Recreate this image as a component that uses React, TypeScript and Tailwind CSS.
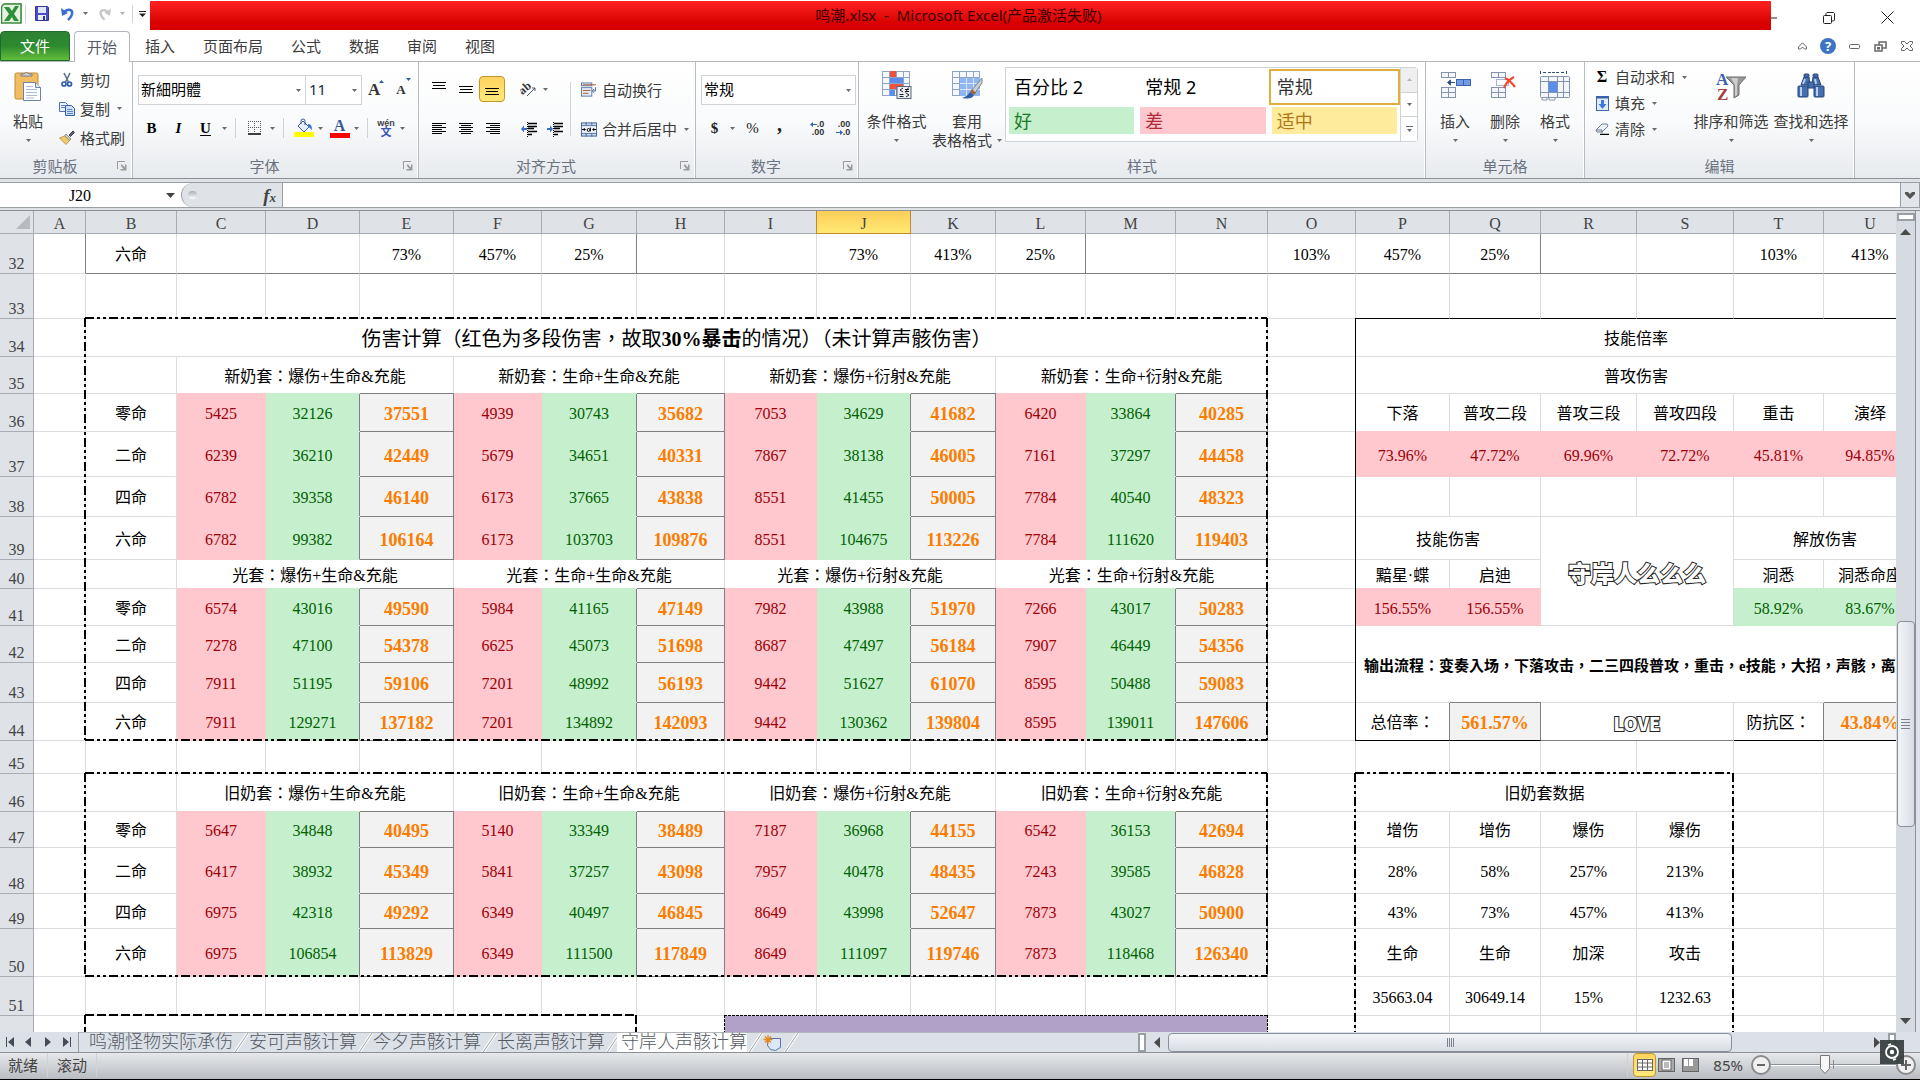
import React from "react";

/* ---------- small shared pieces ---------- */

const Caret = ({ className = "" }: { className?: string }) => (
  <svg width="5" height="3" viewBox="0 0 5 3" className={`shrink-0 ${className}`} aria-hidden="true">
    <path d="M0 0h5L2.500 3z" fill="#6b6b6b" />
  </svg>
);

const Divider = ({ className = "h-5" }: { className?: string }) => (
  <span className={`w-px shrink-0 bg-[#cfd2d6] ${className}`} />
);

const IconButton = ({
  label,
  className = "w-[27px]",
  children,
}: {
  label: string;
  className?: string;
  children: React.ReactNode;
}) => (
  <button type="button" aria-label={label} className={`flex h-[26px] shrink-0 items-center justify-center ${className}`}>
    {children}
  </button>
);

const Group = ({
  title,
  className,
  launcher = true,
  children,
}: {
  title: string;
  className: string;
  launcher?: boolean;
  children: React.ReactNode;
}) => (
  <section
    aria-label={title}
    className={`relative flex shrink-0 flex-col border-r border-[#b9bdc3] shadow-[inset_-1px_0_0_#ffffff] ${className}`}
  >
    <div className="h-[92px]">{children}</div>
    <div className={`flex h-[24px] items-center justify-center text-[#6b7280] ${launcher ? "pr-[22px]" : ""}`}>{title}</div>
    {launcher && (
      <button type="button" aria-label={`${title}设置`} className="absolute right-[5px] bottom-[7px]">
        <svg width="10" height="10" viewBox="0 0 10 10">
          <path d="M.5 8V.5H8" fill="none" stroke="#9a9a9a" />
          <path d="M4 3.5h1L8 6.500V3.500h1.500V9.500H3.500V8H6.500L4 5z" fill="#9a9a9a" />
        </svg>
      </button>
    )}
  </section>
);

const Lines = ({ widths, align, top = 0 }: { widths: number[]; align: "l" | "c" | "r"; top?: number }) => (
  <svg width="14" height="14" viewBox="0 0 14 14" aria-hidden="true">
    {widths.map((w, i) => (
      <rect
        key={i}
        x={align === "l" ? 0 : align === "c" ? (14 - w) / 2 : 14 - w}
        y={top + i * (widths.length > 3 ? 2 : 3)}
        width={w}
        height="1"
        fill="#000"
      />
    ))}
  </svg>
);

const BigButton = ({
  lines,
  className,
  icon,
}: {
  lines: string[];
  className: string;
  icon: React.ReactNode;
}) => (
  <button type="button" className={`flex h-[84px] shrink-0 flex-col items-center pt-[3px] ${className}`}>
    <span className="flex h-[34px] items-center justify-center">{icon}</span>
    <span className="mt-[8px] leading-[20px] whitespace-nowrap">{lines[0]}</span>
    <span className="flex h-[18px] items-center gap-[5px] whitespace-nowrap">
      {lines[1]}
      <Caret />
    </span>
  </button>
);

const SmallButton = ({
  label,
  icon,
  caret = false,
  className = "h-[29px]",
}: {
  label: string;
  icon: React.ReactNode;
  caret?: boolean;
  className?: string;
}) => (
  <button type="button" className={`flex items-center whitespace-nowrap ${className}`}>
    <span className="mr-[5px] flex w-4 justify-center">{icon}</span>
    {label}
    {caret && <Caret className="ml-[7px]" />}
  </button>
);

/* ---------- ribbon drawings ---------- */

const GridIcon = ({ children }: { children?: React.ReactNode }) => (
  <svg width="32" height="32" viewBox="0 0 32 32" aria-hidden="true">
    <rect x="1.500" y="1.500" width="27" height="24" fill="#f4f7fc" stroke="#8fa3c4" />
    <path d="M8.500 1v25M15.500 1v25M22.500 1v25M1 7.500h28M1 13.500h28M1 19.500h28" stroke="#8fa3c4" />
    {children}
  </svg>
);

const PasteIcon = () => (
  <svg width="28" height="32" viewBox="0 0 28 32" aria-hidden="true">
    <rect x="1" y="3" width="23" height="26" rx="1.500" fill="#f0bd62" stroke="#c48b35" />
    <path d="M7 6V4h3a3 3 0 0 1 5 0h3v2z" fill="#d5d8dc" stroke="#777c84" />
    <path d="M9.500 12.500h12l5 5v13h-17z" fill="#fff" stroke="#6c83a9" />
    <path d="M21.500 12.500v5h5" fill="#dbe5f3" stroke="#6c83a9" />
    <path d="M12 16.500h7M12 19.500h11M12 22.500h11M12 25.500h11M12 28h8" stroke="#a9bbd6" />
  </svg>
);

const ScissorsIcon = () => (
  <svg width="12" height="16" viewBox="0 0 12 16" aria-hidden="true">
    <path d="M3 1l4.500 9M9 1L4.500 10" stroke="#5e6f89" strokeWidth="1.600" fill="none" />
    <circle cx="3" cy="12" r="2" fill="none" stroke="#2f5ea8" strokeWidth="1.700" />
    <circle cx="8.500" cy="12" r="2" fill="none" stroke="#2f5ea8" strokeWidth="1.700" />
  </svg>
);

const CopyIcon = () => (
  <svg width="16" height="14" viewBox="0 0 16 14" aria-hidden="true">
    <path d="M.5.5h6l2 2v7h-8z" fill="#e9f0fb" stroke="#4d74b3" />
    <path d="M6.500 3.500h6l3 3v7h-9z" fill="#cfdff6" stroke="#2f5ea8" />
    <path d="M2 3.500h4M2 5.500h4M8 7.500h5M8 9.500h6M8 11.500h6" stroke="#5b84c4" />
  </svg>
);

const BrushIcon = () => (
  <svg width="16" height="15" viewBox="0 0 16 15" aria-hidden="true">
    <path d="M10 5l4-4 1.500 1.500-4 4z" fill="#59606e" stroke="#3d3d66" />
    <path d="M7 4l5 5-2 1.500L5.500 6z" fill="#c6cbd3" stroke="#6d7480" strokeWidth=".7" />
    <path d="M5.500 6l5 4.500L7 14.500 0.500 8z" fill="#edcb6e" stroke="#a97f27" strokeWidth=".7" />
  </svg>
);

const FillIcon = () => (
  <svg width="20" height="20" viewBox="0 0 20 20" aria-hidden="true">
    <path d="M4 8l5-5 6 6-5 5z" fill="#e6edf8" stroke="#3c5f9a" />
    <path d="M7 6V3a2 2 0 0 1 4 0v4" fill="none" stroke="#3c5f9a" />
    <path d="M14 6c3 0 4 2 4 6-2-1-2-3-4-3z" fill="#3f74c8" />
    <rect x="0" y="14" width="20" height="5" fill="#ffff00" />
  </svg>
);

const FontColorIcon = () => (
  <span className="flex flex-col items-center font-['Liberation_Serif',serif] text-base leading-[14px] font-bold text-[#3a5a94]">
    A<span className="h-[5px] w-5 bg-[#ff0000]" />
  </span>
);

const IndentIcon = ({ inwards }: { inwards: boolean }) => (
  <svg width="16" height="15" viewBox="0 0 16 15" aria-hidden="true">
    <path d="M7 1.500h9M7 4.500h9M7 6.500h6M7 9.500h9M7 12.500h4" stroke="#000" strokeWidth="1.500" />
    <path d="M6.500 0v15" stroke="#000" strokeDasharray="1 1" />
    {inwards ? <path d="M0 6h3V3.500L6 7 3 10.500V8H0z" fill="#3a6fc9" /> : <path d="M6 6H3V3.500L0 7l3 3.500V8h3z" fill="#3a6fc9" />}
  </svg>
);

const WrapIcon = () => (
  <svg width="17" height="16" viewBox="0 0 17 16" aria-hidden="true">
    <rect x=".5" y=".5" width="11" height="3" fill="#e5edf8" stroke="#5b78a8" />
    <rect x=".5" y="5.500" width="11" height="9" fill="#e5edf8" stroke="#5b78a8" />
    <path d="M2 2.500h14M2 8.500h8M2 11.500h6" stroke="#a5561f" />
    <path d="M15.500 5v4h-3M14 7l-2 2 2 2" fill="none" stroke="#3c5f9a" />
  </svg>
);

const MergeIcon = () => (
  <svg width="17" height="15" viewBox="0 0 17 15" aria-hidden="true">
    <rect x=".5" y=".5" width="16" height="14" fill="#c7d8f0" stroke="#42618f" />
    <path d="M0 3.500h17M0 11.500h17M5.500 0v3M11.500 0v3M5.500 12v3M11.500 12v3" stroke="#42618f" />
    <rect x="1" y="4" width="15" height="7" fill="#eef3fa" />
    <path d="M1 7.500h4M16 7.500h-4M3.500 6v3M13.500 6v3" stroke="#000" />
    <circle cx="8" cy="8" r="1.500" fill="none" stroke="#000" />
    <path d="M10 5.500v4" stroke="#000" />
  </svg>
);

const DecimalIcon = ({ more }: { more: boolean }) => (
  <span className="flex flex-col font-['Liberation_Sans',sans-serif] text-[9px] leading-[8px] font-bold text-[#333]">
    <span className="flex items-center justify-end">
      {more && (
        <svg width="7" height="5" viewBox="0 0 7 5" aria-hidden="true">
          <path d="M0 2.500L3 0v2h4v1H3v2z" fill="#2f62c0" />
        </svg>
      )}
      {more ? ".0" : ".00"}
    </span>
    <span className="flex items-center justify-end">
      {!more && (
        <svg width="7" height="5" viewBox="0 0 7 5" aria-hidden="true">
          <path d="M7 2.500L4 0v2H0v1h4v2z" fill="#2f62c0" />
        </svg>
      )}
      {more ? ".00" : ".0"}
    </span>
  </span>
);

const ConditionalIcon = () => (
  <GridIcon>
    <rect x="9" y="1" width="6" height="6" fill="#ee5340" />
    <rect x="9" y="8" width="13" height="5" fill="#5b8dee" />
    <rect x="9" y="14" width="13" height="5" fill="#ee5340" />
    <rect x="9" y="20" width="5" height="6" fill="#5b8dee" />
    <rect x="16" y="16.500" width="14" height="12" fill="#e9edf3" stroke="#5a6577" />
    <path d="M22 18l-3 2 3 2M18.500 24.500h4M18.500 26.500h4M24 19.500h4M24 21.500h4M27.500 17.500l-3 5M25 23l3 2-3 2" fill="none" stroke="#222" />
  </GridIcon>
);

const TableFormatIcon = () => (
  <GridIcon>
    <rect x="9" y="8" width="20" height="18" fill="#8fb6f2" />
    <path d="M15.500 8v18M22.500 8v18M9 13.500h20M9 19.500h20" stroke="#d9e6fb" />
    <path d="M31 8L21 20l3 3 7-10z" fill="#c9ced6" stroke="#6a6f78" strokeWidth=".8" />
    <path d="M21 19l4 4-2 2-4-3z" fill="#a8672b" />
    <path d="M19 22l4 3c-2 4-6 4-12 3 4-1 6-3 8-6z" fill="#2f5fa8" />
  </GridIcon>
);

const CellsIcon = ({ kind }: { kind: "insert" | "delete" }) => (
  <svg width="34" height="32" viewBox="0 0 34 32" aria-hidden="true">
    <g fill="#f3f6fb" stroke="#8494ad">
      <rect x="3.500" y="2.500" width="7" height="5" />
      <rect x="10.500" y="2.500" width="7" height="5" />
      <rect x="3.500" y="17.500" width="7" height="5" />
      <rect x="10.500" y="17.500" width="7" height="5" />
      <rect x="3.500" y="22.500" width="7" height="5" />
      <rect x="10.500" y="22.500" width="7" height="5" />
    </g>
    {kind === "insert" ? (
      <>
        <rect x="18.500" y="9.500" width="14" height="6" fill="#6f9be8" stroke="#3b63a8" />
        <path d="M25.500 9.500v6" stroke="#3b63a8" />
        <path d="M17 12.500h-6M12.500 10l-3 2.500 3 2.500z" fill="#34507f" stroke="#34507f" />
      </>
    ) : (
      <>
        <rect x="8.500" y="9.500" width="12" height="6" fill="none" stroke="#4a6ea8" strokeDasharray="1 1" />
        <path d="M17 8c4 2 7 5 10 9M26 7c-4 2-8 6-10 11" fill="none" stroke="#f04a30" strokeWidth="2.200" />
      </>
    )}
  </svg>
);

const FormatIcon = () => (
  <svg width="32" height="32" viewBox="0 0 32 32" aria-hidden="true">
    <path d="M1.500 1v4M27.500 1v4M4 2.500h3M22 2.500h3M9 2.500h12" stroke="#34507f" strokeDasharray="3 1" />
    <rect x="1.500" y="6.500" width="29" height="21" rx="1" fill="#f3f6fb" stroke="#8494ad" />
    <path d="M9.500 6v22M18.500 6v22M24.500 6v22M1 11.500h30M1 22.500h30" stroke="#8494ad" />
    <rect x="10" y="12" width="8" height="10" fill="#5b8dee" />
    <path d="M3 28v2h5v-2M10 28v2h6v-2" fill="#fff" stroke="#8494ad" />
  </svg>
);

const SortIcon = () => (
  <svg width="32" height="32" viewBox="0 0 32 32" aria-hidden="true">
    <path d="M11 7h20l-7 8v10l-5 3V15z" fill="#9a9a9a" stroke="#6f6f6f" />
    <path d="M16 8h7l-1 8v9l-2 1V15z" fill="#cfcfcf" />
    <text x="1" y="15" fontFamily="Liberation Serif, serif" fontWeight="bold" fontSize="17" fill="#3b62ad">A</text>
    <text x="2" y="30" fontFamily="Liberation Serif, serif" fontWeight="bold" fontSize="17" fill="#a63c3c">Z</text>
  </svg>
);

const BinocularsIcon = () => (
  <svg width="28" height="26" viewBox="0 0 28 26" aria-hidden="true">
    <g fill="#466fae" stroke="#26437a">
      <path d="M4 12l3-8h5l1 8zM24 12l-3-8h-5l-1 8z" />
      <rect x="7" y="1" width="5" height="3" rx="1" />
      <rect x="16" y="1" width="5" height="3" rx="1" />
      <rect x="1" y="13" width="10" height="11" rx="1" />
      <rect x="17" y="13" width="10" height="11" rx="1" />
      <path d="M11 9h6v6h-6z" />
    </g>
    <path d="M4 14v9M20 14v9M8 6l-2 5M18 6l1 5" stroke="#b9cdf0" strokeWidth="2" />
  </svg>
);

/* ---------- title bar & tabs ---------- */

const TitleBar = () => (
  <header className="flex h-[31px] shrink-0 items-start bg-white">
    <div className="flex h-[27px] w-[150px] shrink-0 items-center">
      <svg width="22" height="22" viewBox="0 0 22 22" className="ml-px shrink-0" aria-label="Excel">
        <rect x="4" y="1" width="16" height="18" fill="#fff" stroke="#5a9a56" />
        <path d="M0.500 3.500L3 1h17v19H.5z" fill="#e4f2e2" stroke="#3c8a3c" strokeWidth="1.500" />
        <path d="M3 4h5l3 4 3-5h4l-5 8 5 7h-5l-2-4-3 4H3l5-7z" fill="#2f8f3a" />
      </svg>
      <Divider className="ml-[2px] h-[18px] bg-[#8a8a8a]" />
      <button type="button" aria-label="保存" className="ml-[9px] shrink-0">
        <svg width="14" height="15" viewBox="0 0 14 15">
          <path d="M.5 .5h12l1 1v13H.5z" fill="#4a4fc4" stroke="#32369a" />
          <rect x="3" y="1" width="8" height="6" fill="#dfe8fa" />
          <rect x="3" y="9" width="8" height="5" fill="#eceef5" />
          <rect x="8" y="10" width="2" height="4" fill="#32369a" />
        </svg>
      </button>
      <button type="button" aria-label="撤销" className="ml-3 flex shrink-0 items-center">
        <svg width="14" height="14" viewBox="0 0 14 14">
          <path d="M3 5c5-4 9-2 8 2-.5 3-2 4-4 6" fill="none" stroke="#3a6fd0" strokeWidth="2.500" />
          <path d="M0 1l1 8 6-3z" fill="#3a6fd0" />
        </svg>
        <Caret className="ml-[8px]" />
      </button>
      <button type="button" aria-label="恢复" className="ml-[10px] flex shrink-0 items-center opacity-50">
        <svg width="13" height="14" viewBox="0 0 14 14">
          <path d="M11 5C6 1 2 3 3 7c.5 3 2 4 4 6" fill="none" stroke="#909090" strokeWidth="2.500" />
          <path d="M14 1l-1 8-6-3z" fill="#909090" />
        </svg>
        <Caret className="ml-[9px]" />
      </button>
      <Divider className="ml-[7px] h-[18px] bg-[#8a8a8a]" />
      <button type="button" aria-label="自定义快速访问工具栏" className="ml-[6px] shrink-0">
        <svg width="7" height="6" viewBox="0 0 7 6">
          <path d="M0 0h7v1H0zM0 2.500h7L3.500 6z" fill="#222" />
        </svg>
      </button>
    </div>
    <h1 className="mt-px flex h-[29px] flex-1 items-center justify-center bg-linear-to-b from-[#ff2020] to-[#d90000] to-75% pr-[4px] pb-[2px] text-[15px] text-[#3a0000]">
      鸣潮.xlsx&nbsp; - &nbsp;Microsoft Excel(产品激活失败)
    </h1>
    <div className="flex h-[31px] w-[149px] shrink-0 items-center pt-1">
      <button type="button" aria-label="最小化" className="w-[52px]">
        <svg width="6" height="2" viewBox="0 0 6 2"><path d="M0 1h6" stroke="#222" /></svg>
      </button>
      <button type="button" aria-label="还原" className="w-[12px]">
        <svg width="12" height="12" viewBox="0 0 12 12">
          <rect x=".5" y="3.500" width="8" height="8" rx="1" fill="none" stroke="#222" />
          <path d="M3 3V1.500L4 .5h6.500l1 1V8l-1 1H9" fill="none" stroke="#222" />
        </svg>
      </button>
      <button type="button" aria-label="关闭" className="ml-[46px]">
        <svg width="13" height="13" viewBox="0 0 13 13"><path d="M.5.5l12 12M12.500.5l-12 12" stroke="#222" /></svg>
      </button>
    </div>
  </header>
);

const TABS = ["插入", "页面布局", "公式", "数据", "审阅", "视图"];

const TabBar = () => (
  <nav aria-label="功能区" className="flex h-[31px] shrink-0 border-b border-[#b4b8bd] bg-white">
    <button
      type="button"
      className="h-[30px] w-[70px] rounded-t-sm border border-[#1f6b2b] bg-linear-to-b from-[#2e8233] via-[#2c8a2f] to-[#63bd3a] text-white"
    >
      文件
    </button>
    <button
      type="button"
      aria-current="page"
      className="relative -mb-px ml-1 h-[31px] w-[56px] rounded-t-sm border border-b-0 border-[#b4b8bd] bg-white text-[#555b66]"
    >
      开始
    </button>
    <div className="ml-px flex">
      {TABS.map((t) => (
        <button type="button" key={t} className="px-[14px]">
          {t}
        </button>
      ))}
    </div>
    <div className="ml-auto flex items-center pr-[7px] text-[#555]">
      <button type="button" aria-label="折叠功能区" className="mr-[13px]">
        <svg width="9" height="8" viewBox="0 0 9 8">
          <path d="M.5 5L4.500.8 8.500 5v2H6.500L4.500 5l-2 2h-2z" fill="#fff" stroke="#666" />
        </svg>
      </button>
      <button
        type="button"
        aria-label="帮助"
        className="mr-[13px] flex size-4 items-center justify-center rounded-full bg-[#3f74c4] text-[13px] leading-4 font-bold text-white"
      >
        ?
      </button>
      <button type="button" aria-label="窗口最小化" className="mr-[14px]">
        <svg width="11" height="6" viewBox="0 0 11 6"><rect x=".5" y="1.500" width="10" height="4" rx="1" fill="#fff" stroke="#666" /></svg>
      </button>
      <button type="button" aria-label="还原窗口" className="mr-[14px]">
        <svg width="13" height="11" viewBox="0 0 13 11">
          <rect x="5" y="1" width="7" height="6" fill="#fff" stroke="#666" strokeWidth="1.500" />
          <rect x="1" y="4" width="7" height="6" fill="#fff" stroke="#666" strokeWidth="1.500" />
          <rect x="3.500" y="6.500" width="2" height="1.500" fill="none" stroke="#666" />
        </svg>
      </button>
      <button type="button" aria-label="关闭窗口">
        <svg width="12" height="10" viewBox="0 0 12 10">
          <path d="M.5.5h3L6 3 8.500.5h3v2L9 5l2.500 2.500v2h-3L6 7 3.500 9.500h-3v-2L3 5 .5 2.500z" fill="#fff" stroke="#666" />
        </svg>
      </button>
    </div>
  </nav>
);

/* ---------- ribbon ---------- */

const STYLES = [
  { name: "百分比 2", cls: "text-black" },
  { name: "常规 2", cls: "text-black" },
  { name: "常规", cls: "text-[#333] outline-2 outline-offset-1 outline-[#e0ae3c]" },
  { name: "好", cls: "bg-[#c6efce] text-[#1c7a26]" },
  { name: "差", cls: "bg-[#ffc7ce] text-[#b02a35]" },
  { name: "适中", cls: "bg-[#ffeb9c] text-[#b0771a]" },
];

const Ribbon = () => (
  <div className="flex h-[117px] shrink-0 overflow-hidden border-b border-[#8c9097] bg-linear-to-b from-white via-[#fafbfc] to-[#e7eaee]">
    <Group title="剪贴板" className="w-[133px]">
      <div className="flex">
        <div className="flex h-[92px] w-[56px] flex-col pt-1">
          <BigButton lines={["粘贴", ""]} className="w-[56px]" icon={<PasteIcon />} />
        </div>
        <div className="ml-[3px] flex flex-col pt-[3px]">
          <SmallButton label="剪切" icon={<ScissorsIcon />} />
          <SmallButton label="复制" icon={<CopyIcon />} caret />
          <SmallButton label="格式刷" icon={<BrushIcon />} />
        </div>
      </div>
    </Group>

    <Group title="字体" className="w-[286px]">
      <div className="flex items-center pt-[13px] pl-[5px]">
        <label className="relative flex h-[30px] w-[168px] items-center border border-[#cfd2d6] bg-white">
          <input aria-label="字体" defaultValue="新細明體" className="w-full bg-transparent px-[2px] pb-[2px] text-black outline-none" />
          <Caret className="absolute right-1" />
        </label>
        <label className="relative -ml-px flex h-[30px] w-[57px] items-center border border-[#cfd2d6] bg-white">
          <input aria-label="字号" defaultValue="11" className="w-full bg-transparent px-[3px] pb-[2px] text-[#1f2a44] outline-none" />
          <Caret className="absolute right-1" />
        </label>
        <button type="button" aria-label="增大字号" className="ml-[6px] flex items-start font-['Liberation_Serif',serif] text-[17px] leading-5 font-bold text-[#333]">
          A
          <svg width="5" height="3" viewBox="0 0 5 3" className="-ml-px"><path d="M0 3h5L2.500 0z" fill="#2f5ea8" /></svg>
        </button>
        <button type="button" aria-label="减小字号" className="ml-3 flex items-start font-['Liberation_Serif',serif] text-[13px] leading-6 font-bold text-[#333]">
          A
          <svg width="5" height="3" viewBox="0 0 5 3"><path d="M0 0h5L2.500 3z" fill="#2f5ea8" /></svg>
        </button>
      </div>
      <div className="mt-[10px] flex h-[26px] items-center pl-[5px] font-['Liberation_Serif',serif] text-[15px] text-black">
        <IconButton label="加粗"><b>B</b></IconButton>
        <IconButton label="倾斜"><i className="font-bold">I</i></IconButton>
        <IconButton label="下划线"><b className="underline underline-offset-2">U</b></IconButton>
        <Caret className="ml-[3px]" />
        <Divider className="ml-2 h-5" />
        <IconButton label="边框" className="ml-1 w-[30px]">
          <svg width="14" height="14" viewBox="0 0 14 14">
            <path d="M.5 0v12M6.500 0v12M12.500 0v12M0 .5h13M0 6.500h13" stroke="#555" strokeDasharray="1 1" />
            <path d="M0 13h13" stroke="#000" strokeWidth="1.500" />
          </svg>
        </IconButton>
        <Caret />
        <Divider className="ml-2 h-5" />
        <IconButton label="填充颜色" className="ml-[6px] w-[28px]"><FillIcon /></IconButton>
        <Caret />
        <IconButton label="字体颜色" className="ml-[2px] w-[29px]"><FontColorIcon /></IconButton>
        <Caret />
        <Divider className="ml-2 h-5" />
        <IconButton label="拼音" className="ml-1 w-[28px]">
          <span className="flex flex-col items-center font-['Liberation_Sans','Noto_Sans_CJK_SC',sans-serif] text-[9px] leading-[8px] font-bold text-[#444]">
            wén<span className="text-[11px] leading-[11px] text-[#3a55b4]">文</span>
          </span>
        </IconButton>
        <Caret />
      </div>
    </Group>

    <Group title="对齐方式" className="w-[277px]">
      <div className="flex h-[92px] pl-[6px]">
        <div className="flex w-[145px] flex-col">
          <div className="flex h-[54px] items-center">
            <IconButton label="顶端对齐"><Lines widths={[14, 12, 14]} align="c" top={0} /></IconButton>
            <IconButton label="垂直居中"><Lines widths={[14, 12, 14]} align="c" top={4} /></IconButton>
            <IconButton label="底端对齐" className="w-[26px] rounded-sm border border-[#c2962f] bg-linear-to-b from-[#ffd45e] to-[#ffe97a]">
              <Lines widths={[14, 12, 14]} align="c" top={6} />
            </IconButton>
            <Divider className="ml-1" />
            <IconButton label="方向" className="ml-[5px] w-[28px]">
              <svg width="18" height="18" viewBox="0 0 18 18">
                <text x="-1" y="12" transform="rotate(-40 5 9)" fontFamily="Liberation Serif, serif" fontWeight="bold" fontSize="12" fill="#333">ab</text>
                <path d="M7 16l8-8M12 8h3v3" fill="none" stroke="#555" />
              </svg>
            </IconButton>
            <Caret />
          </div>
          <div className="flex h-[26px] items-center">
            <IconButton label="左对齐"><Lines widths={[14, 10, 14, 10, 14, 10]} align="l" top={1} /></IconButton>
            <IconButton label="居中"><Lines widths={[14, 10, 14, 10, 14, 10]} align="c" top={1} /></IconButton>
            <IconButton label="右对齐"><Lines widths={[14, 10, 14, 10, 14, 10]} align="r" top={1} /></IconButton>
            <Divider className="ml-[3px]" />
            <IconButton label="减少缩进量" className="ml-[6px] w-[26px]"><IndentIcon inwards={false} /></IconButton>
            <IconButton label="增加缩进量" className="w-[26px]"><IndentIcon inwards /></IconButton>
          </div>
        </div>
        <Divider className="mt-5 h-[54px]" />
        <div className="ml-[10px] flex flex-col pt-[15px]">
          <SmallButton label="自动换行" icon={<WrapIcon />} className="h-[26px]" />
          <SmallButton label="合并后居中" icon={<MergeIcon />} caret className="mt-[13px] h-[26px]" />
        </div>
      </div>
    </Group>

    <Group title="数字" className="w-[163px]">
      <div className="pt-[13px] pl-[5px]">
        <label className="relative flex h-[30px] w-[155px] items-center border border-[#cfd2d6] bg-white">
          <select aria-label="数字格式" defaultValue="常规" className="w-full appearance-none bg-transparent px-[2px] pb-[2px] text-black outline-none">
            <option>常规</option>
            <option>数值</option>
            <option>百分比</option>
          </select>
          <Caret className="absolute right-1" />
        </label>
        <div className="mt-[10px] flex items-center font-['Liberation_Serif',serif] text-[15px] text-[#222]">
          <IconButton label="会计数字格式" className="w-[27px]"><b>$</b></IconButton>
          <Caret className="ml-[2px]" />
          <IconButton label="百分比样式" className="ml-1 w-[27px]">%</IconButton>
          <IconButton label="千位分隔样式"><b className="pb-2 text-xl">,</b></IconButton>
          <Divider className="ml-1" />
          <IconButton label="增加小数位数" className="ml-[6px] w-[26px]"><DecimalIcon more /></IconButton>
          <IconButton label="减少小数位数" className="w-[26px]"><DecimalIcon more={false} /></IconButton>
        </div>
      </div>
    </Group>

    <Group title="样式" className="w-[567px]" launcher={false}>
      <div className="flex pt-1">
        <BigButton className="w-[75px]" lines={["条件格式", ""]} icon={<ConditionalIcon />} />
        <BigButton className="w-[66px]" lines={["套用", "表格格式"]} icon={<TableFormatIcon />} />
        <div className="mt-px ml-[5px] flex h-[75px]">
          <div className="grid w-[396px] grid-cols-3 grid-rows-[30px_27px] content-start gap-x-[6px] gap-y-[5px] border border-[#cfd2d6] bg-white px-[3px] pt-[4px] text-[18px]">
            {STYLES.map((s) => (
              <button type="button" key={s.name} className={`px-[5px] text-left leading-none ${s.cls}`}>
                {s.name}
              </button>
            ))}
          </div>
          <div className="flex w-[17px] flex-col divide-y divide-[#cfd2d6] rounded-r-sm border border-l-0 border-[#cfd2d6]">
            <button type="button" aria-label="上一行" className="flex flex-1 items-center justify-center bg-[#efefef]">
              <svg width="5" height="3" viewBox="0 0 5 3"><path d="M0 3h5L2.500 0z" fill="#b5b5b5" /></svg>
            </button>
            <button type="button" aria-label="下一行" className="flex flex-1 items-center justify-center bg-white"><Caret /></button>
            <button type="button" aria-label="更多样式" className="flex flex-1 flex-col items-center justify-center gap-[2px] bg-white">
              <span className="h-px w-[7px] bg-[#6b6b6b]" />
              <Caret />
            </button>
          </div>
        </div>
      </div>
    </Group>

    <Group title="单元格" className="w-[159px]" launcher={false}>
      <div className="flex pt-1 pl-1">
        <BigButton className="w-[50px]" lines={["插入", ""]} icon={<CellsIcon kind="insert" />} />
        <BigButton className="w-[50px]" lines={["删除", ""]} icon={<CellsIcon kind="delete" />} />
        <BigButton className="w-[50px]" lines={["格式", ""]} icon={<FormatIcon />} />
      </div>
    </Group>

    <Group title="编辑" className="w-[270px]" launcher={false}>
      <div className="flex pt-[2px] pl-[9px]">
        <div className="flex w-[97px] flex-col">
          <SmallButton className="h-[26px]" caret label="自动求和" icon={<b className="font-['Liberation_Serif',serif] text-base leading-none text-black">Σ</b>} />
          <SmallButton
            className="h-[26px]"
            caret
            label="填充"
            icon={
              <svg width="13" height="15" viewBox="0 0 13 15">
                <rect x=".5" y=".5" width="12" height="14" fill="#e3ecfa" stroke="#3b63a8" />
                <path d="M0 1.500h13" stroke="#3b63a8" strokeWidth="2" />
                <path d="M5 4h3v4h2.500L6.500 13l-4-5H5z" fill="#3a78e0" />
              </svg>
            }
          />
          <SmallButton
            className="h-[26px]"
            caret
            label="清除"
            icon={
              <svg width="14" height="12" viewBox="0 0 14 12">
                <path d="M1 7l6-6h5l1 2-6 6H2z" fill="#eef1f6" stroke="#6d7b93" />
                <path d="M1 7h6v3" fill="none" stroke="#6d7b93" />
                <path d="M5 11.500h9" stroke="#000" strokeWidth="1.500" />
              </svg>
            }
          />
        </div>
        <div className="flex pt-[2px]">
          <BigButton className="w-[80px]" lines={["排序和筛选", ""]} icon={<SortIcon />} />
          <BigButton className="w-[80px]" lines={["查找和选择", ""]} icon={<BinocularsIcon />} />
        </div>
      </div>
    </Group>
  </div>
);

const FormulaBar = () => (
  <div className="flex h-[32px] shrink-0 items-start border-b border-[#8c9097] bg-[#dfe2e7] pt-[3px]">
    <div className="flex h-[26px] flex-1 border-y border-[#9a9ea5] bg-white">
      <label className="relative flex w-[181px] items-center">
        <input aria-label="名称框" defaultValue="J20" className="w-[160px] bg-transparent pt-[2px] text-center font-['Liberation_Serif',serif] text-base text-black outline-none" />
        <svg width="9" height="5" viewBox="0 0 9 5" className="absolute right-[6px]" aria-hidden="true"><path d="M0 0h9L4.500 5z" fill="#444" /></svg>
      </label>
      <div className="flex w-[102px] items-center justify-between rounded-l-full border-x border-[#9a9ea5] bg-[#dfe2e7] pr-[6px] pl-[6px]">
        <span className="h-[8px] w-[9px] rounded-full bg-linear-to-b from-[#aaaeb3] to-white" />
        <button type="button" aria-label="插入函数" className="font-['Liberation_Serif',serif] text-[19px] leading-none font-bold text-[#444] italic">
          f<span className="text-[13px]">x</span>
        </button>
      </div>
      <input aria-label="编辑栏" className="min-w-0 flex-1 bg-white px-1 outline-none" />
      <button type="button" aria-label="展开编辑栏" className="flex w-5 items-center justify-center border-x border-[#9a9ea5] bg-[#e2e5ea]">
        <svg width="10" height="7" viewBox="0 0 10 7"><path d="M0 0h3l2 2 2-2h3v2L5 7 0 2z" fill="#555" /></svg>
      </button>
    </div>
  </div>
);

/* ---------- worksheet ---------- */

const HEAD_W = 34;
const HEAD_H = 23;
const COLS: [string, number][] = [
  ["A", 52], ["B", 91], ["C", 89], ["D", 94], ["E", 94], ["F", 88], ["G", 95], ["H", 88], ["I", 92], ["J", 94], ["K", 85],
  ["L", 90], ["M", 90], ["N", 92], ["O", 88], ["P", 94], ["Q", 91], ["R", 96], ["S", 97], ["T", 90], ["U", 93],
];

type Kind = "plain" | "bad" | "good" | "calc";
type Cell = { t?: React.ReactNode; k?: Kind; cs?: number; rs?: number; c?: string };
type Row = { n: number; h: number; cells: Cell[] };

const e = (count: number): Cell[] => Array.from({ length: count }, () => ({}));
const p = (...ts: string[]): Cell[] => ts.map((t) => ({ t }));
const bad = (...ts: string[]): Cell[] => ts.map((t) => ({ t, k: "bad" as Kind }));
const good = (...ts: string[]): Cell[] => ts.map((t) => ({ t, k: "good" as Kind }));

const KINDS: Kind[] = ["bad", "good", "calc"];
const dmg = (label: string, values: string): Cell[] => [
  {},
  { t: label },
  ...values.split(" ").map((t, i) => ({ t, k: KINDS[i % 3], c: KINDS[i % 3] === "good" ? "border-r-[#7f7f7f]" : undefined })),
  {},
];
const sets = (prefix: string): Cell[] => [
  {},
  {},
  ...["爆伤+生命", "生命+生命", "爆伤+衍射", "生命+衍射"].map((s) => ({ t: `${prefix}：${s}&充能`, cs: 3 })),
  {},
];

const ART = "font-['Noto_Sans_CJK_SC',sans-serif] font-black text-white [-webkit-text-stroke:2px_#222] [paint-order:stroke_fill]";
const NB = "border-b-[#7f7f7f]";
const BLK = "border-b-black";

const ROWS: Row[] = [
  {
    n: 32, h: 40,
    cells: [
      { c: "border-r-[#7f7f7f]" },
      ...["六命", "", "", "73%", "457%", "25%", "", "", "73%", "413%", "25%", "", "", "103%", "457%", "25%", "", "", "103%", "413%"].map(
        (t, i) => ({ t, c: i === 5 || i === 10 || i === 15 ? "border-b-[#7f7f7f] border-r-[#7f7f7f]" : NB }),
      ),
    ],
  },
  { n: 33, h: 45, cells: [...e(15), ...e(6).map(() => ({ c: BLK }))] },
  {
    n: 34, h: 38,
    cells: [
      {},
      {
        t: (
          <span className="text-xl leading-6">
            伤害计算（红色为多段伤害，故取<b>30%暴击</b>的情况）（未计算声骸伤害）
          </span>
        ),
        cs: 13,
      },
      { c: "border-r-black" },
      { t: "技能倍率", cs: 6 },
    ],
  },
  { n: 35, h: 37, cells: [...sets("新奶套"), { t: "普攻伤害", cs: 6 }] },
  { n: 36, h: 38, cells: [...dmg("零命", "5425 32126 37551 4939 30743 35682 7053 34629 41682 6420 33864 40285"), ...p("下落", "普攻二段", "普攻三段", "普攻四段", "重击", "演绎")] },
  { n: 37, h: 45, cells: [...dmg("二命", "6239 36210 42449 5679 34651 40331 7867 38138 46005 7161 37297 44458"), ...bad("73.96%", "47.72%", "69.96%", "72.72%", "45.81%", "94.85%")] },
  { n: 38, h: 40, cells: [...dmg("四命", "6782 39358 46140 6173 37665 43838 8551 41455 50005 7784 40540 48323"), ...e(6)] },
  {
    n: 39, h: 43,
    cells: [
      ...dmg("六命", "6782 99382 106164 6173 103703 109876 8551 104675 113226 7784 111620 119403"),
      { t: "技能伤害", cs: 2 },
      { t: <span className={`text-[23px] leading-6 ${ART}`}>守岸人么么么</span>, cs: 2, rs: 3 },
      { t: "解放伤害", cs: 2 },
    ],
  },
  { n: 40, h: 29, cells: [...sets("光套"), ...p("黯星·蝶", "启迪", "洞悉", "洞悉命座")] },
  { n: 41, h: 37, cells: [...dmg("零命", "6574 43016 49590 5984 41165 47149 7982 43988 51970 7266 43017 50283"), ...bad("156.55%", "156.55%"), ...good("58.92%", "83.67%")] },
  {
    n: 42, h: 37,
    cells: [
      ...dmg("二命", "7278 47100 54378 6625 45073 51698 8687 47497 56184 7907 46449 54356"),
      {
        t: <b className="block pl-2 text-left text-[15px]">输出流程：变奏入场，下落攻击，二三四段普攻，重击，e技能，大招，声骸，离场</b>,
        cs: 6,
        rs: 2,
      },
    ],
  },
  { n: 43, h: 40, cells: dmg("四命", "7911 51195 59106 7201 48992 56193 9442 51627 61070 8595 50488 59083") },
  {
    n: 44, h: 38,
    cells: [
      ...dmg("六命", "7911 129271 137182 7201 134892 142093 9442 130362 139804 8595 139011 147606"),
      { t: "总倍率：", c: "border-b-black border-r-[#7f7f7f]" },
      { t: "561.57%", k: "calc", c: BLK },
      { t: <span className={`text-lg leading-5 ${ART}`}>LOVE</span>, cs: 2, c: NB },
      { t: "防抗区：", c: "border-b-black border-r-[#7f7f7f]" },
      { t: "43.84%", k: "calc", c: BLK },
    ],
  },
  { n: 45, h: 33, cells: e(21) },
  { n: 46, h: 38, cells: [...sets("旧奶套"), { t: "旧奶套数据", cs: 4 }, {}, {}] },
  { n: 47, h: 36, cells: [...dmg("零命", "5647 34848 40495 5140 33349 38489 7187 36968 44155 6542 36153 42694"), ...p("增伤", "增伤", "爆伤", "爆伤", "", "")] },
  { n: 48, h: 46, cells: [...dmg("二命", "6417 38932 45349 5841 37257 43098 7957 40478 48435 7243 39585 46828"), ...p("28%", "58%", "257%", "213%", "", "")] },
  { n: 49, h: 35, cells: [...dmg("四命", "6975 42318 49292 6349 40497 46845 8649 43998 52647 7873 43027 50900"), ...p("43%", "73%", "457%", "413%", "", "")] },
  { n: 50, h: 48, cells: [...dmg("六命", "6975 106854 113829 6349 111500 117849 8649 111097 119746 7873 118468 126340"), ...p("生命", "生命", "加深", "攻击", "", "")] },
  { n: 51, h: 39, cells: [...e(15), ...p("35663.04", "30649.14", "15%", "1232.63", "", "")] },
  { n: 52, h: 40, cells: [{}, { cs: 6 }, {}, { cs: 6, c: "bg-[#b1a0c7]" }, ...e(7)] },
];

/* filled cells also cover the grid line above them */
const KIND_CLASS: Record<Kind, string> = {
  plain: "text-black",
  bad: "bg-[#ffc7ce] text-[#9c0006] border-transparent bg-clip-border shadow-[0_-1px_0_#ffc7ce]",
  good: "bg-[#c6efce] text-[#006100] border-transparent bg-clip-border shadow-[0_-1px_0_#c6efce]",
  calc: "bg-[#f2f2f2] text-[#fa7d00] font-bold text-lg leading-4 border-[#7f7f7f] shadow-[0_-1px_0_#7f7f7f]",
};

/* edge position after a column letter / row number, in sheet coordinates */
const xAfter = (name: string) => {
  let x = HEAD_W;
  for (const [n, w] of COLS) {
    x += w;
    if (n === name) break;
  }
  return x - 1;
};
const yAfter = (num: number) => ROWS.filter((r) => r.n <= num).reduce((s, r) => s + r.h, HEAD_H) - 1;

const FRAMES = [
  { from: "A", to: "N", top: 33, bottom: 44, dash: "9 3 3 3 3 3", w: 2 },
  { from: "A", to: "N", top: 45, bottom: 50, dash: "9 3 3 3 3 3", w: 2 },
  { from: "O", to: "S", top: 45, bottom: 52, dash: "9 3 3 3 3 3", w: 2 },
  { from: "A", to: "G", top: 51, bottom: 52, dash: "9 3", w: 2 },
  { from: "H", to: "N", top: 51, bottom: 52, dash: "3 1", w: 1 },
];

const Frames = () => (
  <svg className="pointer-events-none absolute top-0 left-0 size-full" aria-hidden="true">
    {FRAMES.map((f, i) => {
      const x1 = xAfter(f.from);
      const x2 = xAfter(f.to);
      const y1 = yAfter(f.top);
      const y2 = yAfter(f.bottom);
      return (
        <g key={i} stroke="#000" strokeWidth={f.w} strokeDasharray={f.dash} shapeRendering="crispEdges">
          <path d={`M${x1} ${y1}H${x2}`} />
          <path d={`M${x1} ${y2}H${x2}`} />
          <path d={`M${x1} ${y1}V${y2}`} />
          <path d={`M${x2} ${y1}V${y2}`} />
        </g>
      );
    })}
    <path
      d={`M${xAfter("O")} ${yAfter(33)}V${yAfter(44) + 1}`}
      transform="translate(0.5 0)"
      stroke="#000"
    />
  </svg>
);

const Sheet = () => (
  <div className="relative min-w-0 flex-1 overflow-hidden bg-white font-['Liberation_Serif','Noto_Sans_CJK_TC','Noto_Sans_CJK_SC',serif] text-base leading-4">
    <table className="w-[1917px] table-fixed border-separate border-spacing-0 text-center">
      <colgroup>
        <col className="w-[34px]" />
        {COLS.map(([n, w]) => (
          <col key={n} style={{ width: w }} />
        ))}
      </colgroup>
      <thead>
        <tr className="h-[23px] bg-[#dfe2e7] text-[#444]">
          <th aria-label="全选" className="border-r border-b border-[#a9adb3] p-0">
            <svg width="14" height="14" viewBox="0 0 14 14" className="ml-4"><path d="M14 0v14H0z" fill="#b7bbc0" /></svg>
          </th>
          {COLS.map(([n]) => (
            <th
              key={n}
              scope="col"
              className={
                n === "J"
                  ? "border-r border-b border-[#c28a30] bg-linear-to-b from-[#fdce58] to-[#ffea74] p-0 pt-1 font-normal shadow-[-1px_0_0_#c28a30]"
                  : "border-r border-b border-[#a9adb3] p-0 pt-1 font-normal"
              }
            >
              {n}
            </th>
          ))}
        </tr>
      </thead>
      <tbody>
        {ROWS.map((r) => (
          <tr key={r.n} style={{ height: r.h }}>
            <th scope="row" className="border-r border-b border-[#a9adb3] bg-[#dfe2e7] p-0 pb-px align-bottom font-normal text-[#444]">
              {r.n}
            </th>
            {r.cells.map((c, i) => (
              <td
                key={i}
                colSpan={c.cs}
                rowSpan={c.rs}
                className={`overflow-hidden border-r border-b p-0 pt-[3px] whitespace-nowrap ${c.k ? "" : "border-[#dadcdd]"} ${KIND_CLASS[c.k ?? "plain"]} ${c.c ?? ""}`}
              >
                {c.t}
              </td>
            ))}
          </tr>
        ))}
      </tbody>
    </table>
    <Frames />
  </div>
);

const VScroll = () => (
  <div className="flex w-6 shrink-0 border-r-4 border-[#dfe3e9] bg-[#d6dae1]">
    <div className="flex w-5 flex-col items-center border-r border-[#8c9097]">
      <span className="mt-[2px] h-[8px] w-[18px] shrink-0 border-2 border-[#9a9ea5] bg-white" />
      <button type="button" aria-label="向上滚动" className="mt-2 mb-1">
        <svg width="11" height="6" viewBox="0 0 11 6"><path d="M0 6h11L5.500 0z" fill="#4a4a4a" /></svg>
      </button>
      <span className="flex-[384] basis-0" />
      <span className="flex w-[18px] flex-[206] basis-0 flex-col items-center justify-center gap-[2px] rounded-sm border border-[#8a909b] bg-linear-to-r from-[#f2f4f7] to-[#d9dde4]">
        {[0, 1, 2, 3].map((i) => (
          <span key={i} className="h-px w-[9px] bg-[#7d838e]" />
        ))}
      </span>
      <span className="flex-[192] basis-0" />
      <button type="button" aria-label="向下滚动" className="mb-2">
        <svg width="11" height="6" viewBox="0 0 11 6"><path d="M0 0h11L5.500 6z" fill="#4a4a4a" /></svg>
      </button>
    </div>
  </div>
);

/* ---------- bottom bars ---------- */

const NAV_PATHS = ["M1 0h1v10H1zM9 0v10L3 5z", "M7 0v10L1 5z", "M2 0v10l6-5z", "M8 0h1v10H8zM1 0v10l6-5z"];
const NAV_LABELS = ["第一个工作表", "上一个工作表", "下一个工作表", "最后一个工作表"];
const SHEETS = ["鸣潮怪物实际承伤", "安可声骸计算", "今夕声骸计算", "长离声骸计算", "守岸人声骸计算"];

const Slash = () => (
  <svg width="16" height="21" viewBox="0 0 16 21" className="shrink-0" aria-hidden="true">
    <path d="M1 21L15 0" stroke="#fff" strokeWidth="3" />
    <path d="M1 21L15 0" stroke="#9a9ea5" />
  </svg>
);

const SheetBar = () => (
  <div className="relative flex h-[21px] shrink-0 overflow-hidden border-b border-[#8c9097] bg-[#dce0e7]">
    <div className="flex w-[79px] shrink-0 items-center justify-around border-r border-[#9a9ea5] pr-px">
      {NAV_PATHS.map((d, i) => (
        <button type="button" key={d} aria-label={NAV_LABELS[i]}>
          <svg width="10" height="10" viewBox="0 0 10 10"><path d={d} fill="#444c5a" /></svg>
        </button>
      ))}
    </div>
    <div className="flex w-[1059px] shrink-0 border-t border-[#b4b8bd] pl-[10px] text-lg leading-[16px] font-light text-[#555a62]">
      {SHEETS.map((s, i) => (
        <React.Fragment key={s}>
          <button
            type="button"
            aria-current={i === 4 ? "page" : undefined}
            className={i === 4 ? "-ml-1 bg-white pb-1 pl-1 whitespace-nowrap" : "pb-1 whitespace-nowrap"}
          >
            {s}
          </button>
          <Slash />
        </React.Fragment>
      ))}
      <button type="button" aria-label="插入工作表">
        <svg width="20" height="18" viewBox="0 0 20 18">
          <path d="M4.500 4.500h13v9l-2 1-3 2-5-1-3-4z" fill="#dce7f8" stroke="#5474ad" />
          <path d="M5 1v9M.5 5.500h9M2 2.500l6 6M8 2.500l-6 6" stroke="#e38b1c" strokeWidth="1.300" />
        </svg>
      </button>
      <Slash />
    </div>
    <div className="flex min-w-0 flex-1 items-center pr-6">
      <span className="h-[19px] w-2 shrink-0 border-2 border-[#9a9ea5] bg-white" />
      <button type="button" aria-label="向左滚动" className="mx-2 shrink-0">
        <svg width="6" height="11" viewBox="0 0 6 11"><path d="M6 0v11L0 5.500z" fill="#4a4a4a" /></svg>
      </button>
      <span className="flex h-[19px] flex-[562] basis-0 items-center justify-center gap-px rounded-sm border border-[#8a909b] bg-linear-to-b from-[#f2f4f7] to-[#d9dde4]">
        {[0, 1, 2, 3].map((i) => (
          <span key={i} className="h-[9px] w-px bg-[#7d838e]" />
        ))}
      </span>
      <span className="flex-[142] basis-0" />
      <button type="button" aria-label="向右滚动" className="mr-2 shrink-0">
        <svg width="6" height="11" viewBox="0 0 6 11"><path d="M0 0v11l6-5.500z" fill="#4a4a4a" /></svg>
      </button>
      <span className="h-[19px] w-2 shrink-0 border-2 border-[#9a9ea5] bg-white" />
    </div>
  </div>
);

const StatusBar = () => (
  <footer className="relative flex h-[27px] shrink-0 items-center border-b border-black bg-linear-to-b from-[#e6e8ea] to-[#b9bdc3] pb-[2px] text-[#444]">
    <span className="pl-2">就绪</span>
    <Divider className="ml-[9px] h-6 bg-[#8c9097]" />
    <span className="pl-[9px]">滚动</span>
    <Divider className="ml-[9px] h-6 bg-[#8c9097]" />
    <div className="ml-auto flex items-center pr-1">
      <Divider className="mr-[5px] h-6 bg-[#9a9ea5]" />
      <button type="button" aria-label="普通视图" aria-pressed="true" className="flex h-6 w-[23px] items-center justify-center rounded-sm border border-[#c2962f] bg-linear-to-b from-[#ffd45e] to-[#ffe97a]">
        <svg width="16" height="12" viewBox="0 0 16 12">
          <rect width="16" height="12" fill="#666" />
          <path d="M1 1h4v2.500H1zM6 1h4v2.500H6zM11 1h4v2.500h-4zM1 4.500h4v3H1zM6 4.500h4v3H6zM11 4.500h4v3h-4zM1 8.500h4V11H1zM6 8.500h4V11H6zM11 8.500h4V11h-4z" fill="#fff" />
        </svg>
      </button>
      <button type="button" aria-label="页面布局视图" className="ml-[2px]">
        <svg width="17" height="14" viewBox="0 0 17 14">
          <rect x=".5" y=".5" width="16" height="13" fill="#aaa" stroke="#666" />
          <rect x="4" y="2" width="9" height="10" fill="#fff" stroke="#666" />
          <path d="M6 5h5M6 7h5M6 9h5" stroke="#777" />
        </svg>
      </button>
      <button type="button" aria-label="分页预览" className="ml-[7px]">
        <svg width="17" height="14" viewBox="0 0 17 14">
          <rect x=".5" y=".5" width="16" height="13" fill="#999" stroke="#666" />
          <path d="M2 1h4v7H2zM7 1h4v7H7z" fill="#fff" />
        </svg>
      </button>
      <span className="ml-[14px]">85%</span>
      <button type="button" aria-label="缩小" className="ml-2 flex size-5 items-center justify-center rounded-full border-2 border-[#8a8a8a] bg-[#f0f0f0]">
        <span className="h-[2px] w-2 bg-[#666]" />
      </button>
      <label className="relative flex h-6 w-[125px] items-center">
        <span className="h-[2px] w-full border-b border-white bg-[#8a8f98]" />
        <input type="range" aria-label="显示比例" min={10} max={160} defaultValue={85} className="absolute inset-0 w-full opacity-0" />
        <svg width="16" height="20" viewBox="0 0 16 20" className="pointer-events-none absolute left-12" aria-hidden="true">
          <path d="M1.500.5h9v13L6 18.500l-4.500-5z" fill="#f7f7f7" stroke="#777" />
          <path d="M14.500 5v9" stroke="#8a8f98" />
        </svg>
      </label>
      <button type="button" aria-label="放大" className="flex size-5 items-center justify-center rounded-full border-2 border-[#8a8a8a] bg-[#f0f0f0]">
        <svg width="10" height="10" viewBox="0 0 10 10"><path d="M0 5h10M5 0v10" stroke="#666" strokeWidth="2" /></svg>
      </button>
    </div>
    <button type="button" aria-label="录制" className="absolute right-4 bottom-[15px] flex size-6 items-center justify-center bg-[#333a3a]/90">
      <svg width="18" height="20" viewBox="0 0 18 20">
        <circle cx="9" cy="10" r="6" fill="none" stroke="#fff" strokeWidth="1.800" />
        <circle cx="9" cy="10" r="2.200" fill="#fff" />
        <path d="M5 3l3-1M13 17l-3 1" fill="none" stroke="#fff" strokeWidth="1.500" />
      </svg>
    </button>
  </footer>
);

export default function App() {
  return (
    <div className="flex h-screen flex-col overflow-hidden bg-[#dfe2e7] font-['Noto_Sans','Noto_Sans_CJK_SC',sans-serif] text-[15px] leading-5 text-[#3b3b3b]">
      <TitleBar />
      <TabBar />
      <Ribbon />
      <FormulaBar />
      <main className="flex min-h-0 flex-1">
        <Sheet />
        <VScroll />
      </main>
      <SheetBar />
      <StatusBar />
    </div>
  );
}
